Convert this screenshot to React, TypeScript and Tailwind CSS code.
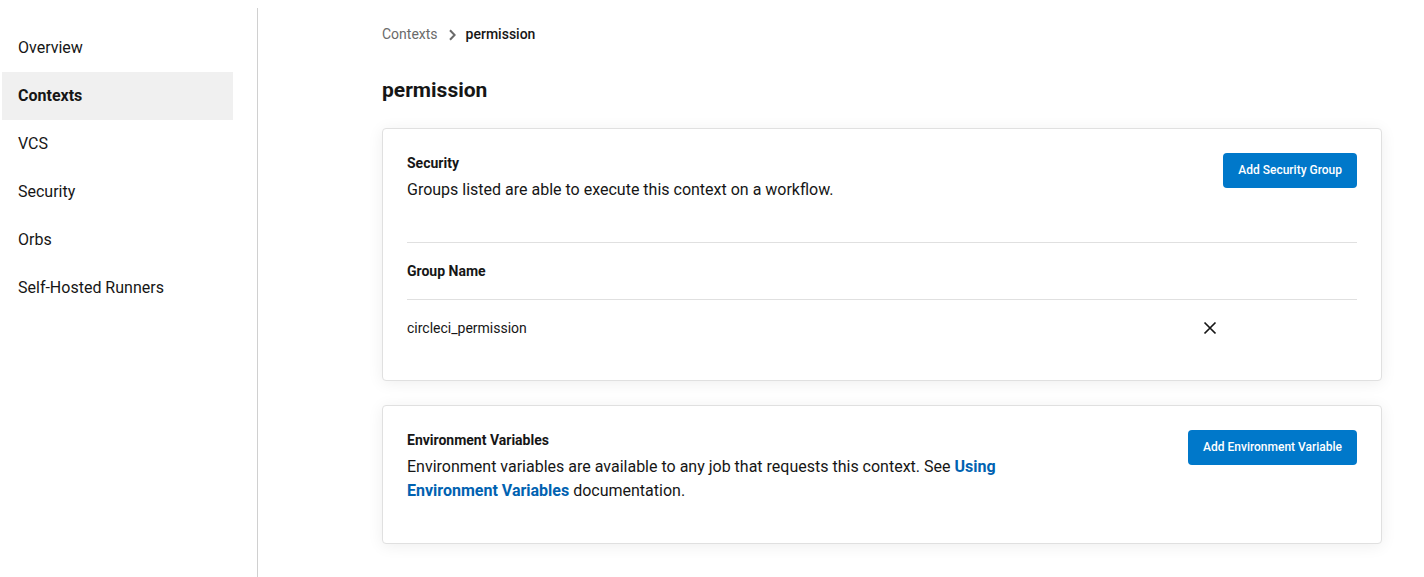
import { ReactNode } from "react";

const navItems = ["Overview", "Contexts", "VCS", "Security", "Orbs", "Self-Hosted Runners"];

function Sidebar({ current }: { current: string }) {
  return (
    <nav aria-label="Organization settings" className="mt-2 w-[258px] shrink-0 border-r border-[#d0d0d0] pt-4 pr-6 pl-0.5">
      <ul>
        {navItems.map((item) => (
          <li key={item}>
            <a
              href="#"
              aria-current={item === current ? "page" : undefined}
              className={
                item === current
                  ? "flex h-12 items-center bg-[#f0f0f0] px-4 text-base font-bold"
                  : "flex h-12 items-center px-4 text-base"
              }
            >
              {item}
            </a>
          </li>
        ))}
      </ul>
    </nav>
  );
}

function Card({ title, action, children, extra }: { title: string; action: string; children: ReactNode; extra?: ReactNode }) {
  return (
    <section className="rounded border border-[#e0e0e0] bg-white p-6 shadow-[0_2px_16px_rgba(0,0,0,0.07)]">
      <header className="flex items-start justify-between gap-6 pb-4">
        <div className="max-w-[600px]">
          <h2 className="text-sm leading-5 font-bold">{title}</h2>
          <p className="mt-[5px] text-base leading-6">{children}</p>
        </div>
        <button type="button" className="h-[35px] shrink-0 rounded bg-[#0078ca] px-[15px] pb-px text-xs font-medium text-white">
          {action}
        </button>
      </header>
      {extra}
    </section>
  );
}

export default function App() {
  return (
    <div className="flex min-h-screen bg-white font-[Roboto,sans-serif] text-[#161616]">
      <Sidebar current="Contexts" />
      <main className="flex-1 pt-6 pr-[42px] pb-8 pl-31">
        <nav aria-label="Breadcrumb" className="flex h-5 items-center gap-2 text-sm">
          <a href="#" className="text-[#6a6a6a]">Contexts</a>
          <svg viewBox="0 0 12 12" className="mt-0.5 size-3" fill="none" stroke="#6a6a6a" strokeWidth="2" aria-hidden="true">
            <path d="M4 1.2 8.6 6 4 10.8" />
          </svg>
          <span aria-current="page" className="font-medium">permission</span>
        </nav>
        <h1 className="mt-8 text-[21px] leading-7 font-bold">permission</h1>
        <div className="mt-6 flex flex-col gap-6">
          <Card
            title="Security"
            action="Add Security Group"
            extra={
              <table className="mt-6 w-full table-fixed text-left text-sm">
                <thead>
                  <tr className="h-[57px] border-y border-[#e0e0e0]">
                    <th className="font-bold">Group Name</th>
                    <th className="w-[154px]" />
                  </tr>
                </thead>
                <tbody>
                  <tr className="h-14">
                    <td>circleci_permission</td>
                    <td>
                      <button type="button" aria-label="Remove circleci_permission" className="block">
                        <svg viewBox="0 0 14 14" className="size-3.5" fill="none" stroke="#161616" strokeWidth="1.7" aria-hidden="true">
                          <path d="M1.5 1.5 12.5 12.5M12.5 1.5 1.5 12.5" />
                        </svg>
                      </button>
                    </td>
                  </tr>
                </tbody>
              </table>
            }
          >
            Groups listed are able to execute this context on a workflow.
          </Card>
          <Card title="Environment Variables" action="Add Environment Variable">
            Environment variables are available to any job that requests this context. See{" "}
            <a href="#" className="font-bold text-[#0062b1]">Using Environment Variables</a> documentation.
          </Card>
        </div>
      </main>
    </div>
  );
}
